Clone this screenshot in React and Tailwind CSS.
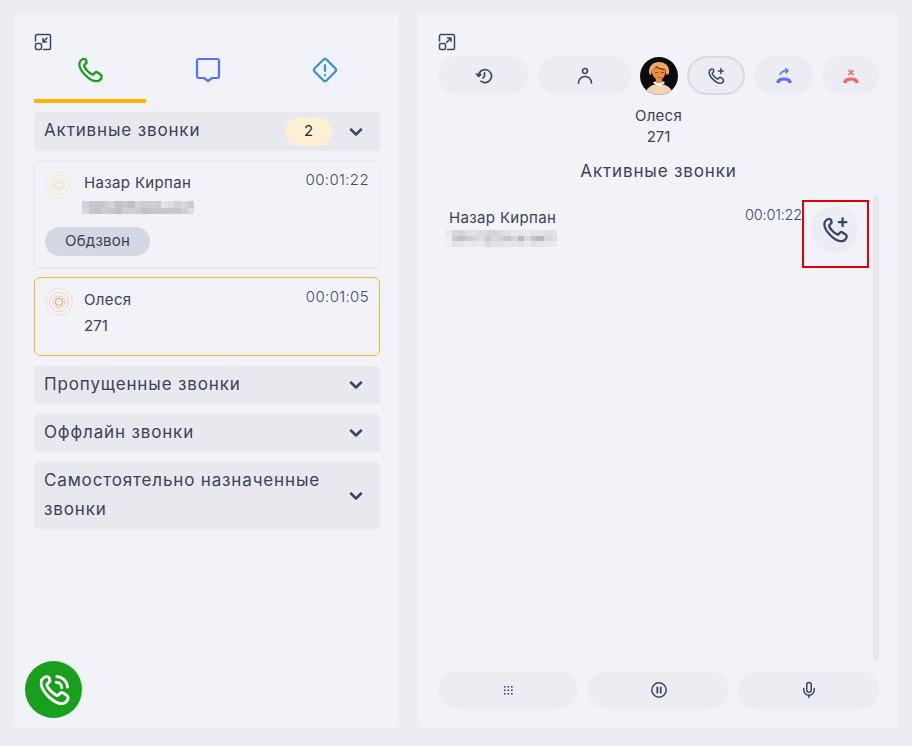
import React from 'react';
import { ChevronDown, Mic } from 'lucide-react';

// pixelated phone numbers, colours read off the screenshot
const mosaicA = [
  '#d0d2d8', '#c6c9cf', '#c4c7cd', '#c8cbd1', '#d2d4d9', '#c1c4ca', '#c6c9cf', '#bfc2c9', '#cfd2d7', '#c9ccd1', '#cbced3', '#c8cbd1', '#e3e4e8', '#dcdee2', '#cfd1d7', '#d6d8dd', '#c9cbd1',
  '#d8d9da', '#c4c7cd', '#c0c3ca', '#ccced4', '#c6c9cf', '#bfc2c9', '#cdd0d5', '#cfd1d6', '#c9ccd1', '#bfc2c9', '#c4c7cc', '#c6c8ce', '#c3c6cc', '#c5c8cd', '#c4c7cc', '#ced0d5', '#dcdee2',
];
const mosaicB = [
  '#e9eaee', '#d6d8dc', '#d3d5da', '#dfe0e4', '#dfe1e5', '#d8dade', '#d4d6db', '#d2d4d9', '#d9dbdf', '#dfe1e5', '#e6e7ea', '#e4e5e9', '#e9eaed', '#e2e3e7', '#e5e6ea', '#dfe0e4', '#e2e3e7',
  '#eff0f3', '#c8cbd0', '#c0c3c9', '#cbced3', '#d2d4d9', '#d9dce3', '#c9ccd1', '#d8dade', '#d1d3d8', '#c6c9ce', '#d4d6da', '#b7bac2', '#d8dade', '#bfc2c8', '#b6bac2', '#d5d7db', '#dcdee2',
  '#eceef0', '#dfe1e4', '#e3e5e8', '#e8e9ec', '#e6e7ea', '#e9eaee', '#d9dbdf', '#e1e2e6', '#dfe0e4', '#e5e6ea', '#e3e4e8', '#e0e2e5', '#e7e8ec', '#e0e1e5', '#e6e7eb', '#e5e6e9', '#e8e9ec',
];

const Mosaic = ({ cells, cols, cellW, cellH, className }) => {
  const rows = Math.ceil(cells.length / cols);
  return (
    <svg className={className} width={cols * cellW} height={rows * cellH} viewBox={`0 0 ${cols * cellW} ${rows * cellH}`} shapeRendering="crispEdges">
      {cells.map((c, i) => (
        <rect key={i} x={(i % cols) * cellW} y={Math.floor(i / cols) * cellH} width={cellW} height={cellH} fill={c} />
      ))}
    </svg>
  );
};

const PHONE_PATH = 'M7 2.500c-1 0-3.500 1-4 3.500-.5 3 1.500 7 5 10.500s7.500 5.500 10.500 5c2.500-.5 3.500-3 3.500-4 0-.8-.5-1.300-1-1.700l-2.500-1.700c-.8-.5-1.700-.4-2.300.3l-1 1.100c-.4.4-1 .5-1.500.2-1.500-.8-2.800-1.800-3.800-2.800s-2-2.300-2.800-3.800c-.3-.5-.2-1.100.2-1.500l1.100-1c.7-.6.8-1.500.3-2.300L8.700 3.500C8.300 3 7.800 2.500 7 2.500z';

const PhonePlus = ({ size = 18 }) => (
  <svg width={size} height={size} viewBox="0 0 24 24" fill="none" stroke="#3d4565" strokeWidth="2" strokeLinecap="round" strokeLinejoin="round">
    <path d={PHONE_PATH} />
    <path d="M18.500 2v6.500M15.250 5.250h6.500" />
  </svg>
);

const PhoneIcon = ({ size, color, strokeWidth = 2, waves = false }) => (
  <svg width={size} height={size} viewBox="0 0 24 24" fill="none" stroke={color} strokeWidth={strokeWidth} strokeLinecap="round" strokeLinejoin="round">
    <path d={PHONE_PATH} />
    {waves && <path d="M14 2.500a8 8 0 0 1 7.500 7.500M13.500 6.500a4 4 0 0 1 4 4" />}
  </svg>
);

const Shrink = () => (
  <svg width="18" height="18" viewBox="0 0 18 18" fill="none" stroke="#3d4565" strokeWidth="1.500" strokeLinecap="round" strokeLinejoin="round">
    <path d="M1.500 8V3a1.500 1.500 0 0 1 1.500-1.500h12A1.500 1.500 0 0 1 16.500 3v12a1.500 1.500 0 0 1-1.500 1.500H9.500" />
    <rect x="1.500" y="10.500" width="6" height="6" rx="1.500" />
    <path d="M13 5l-4 4M9 5.500V9h3.500" />
  </svg>
);

const Expand = () => (
  <svg width="18" height="18" viewBox="0 0 18 18" fill="none" stroke="#3d4565" strokeWidth="1.500" strokeLinecap="round" strokeLinejoin="round">
    <path d="M1.500 8V3a1.500 1.500 0 0 1 1.500-1.500h12A1.500 1.500 0 0 1 16.500 3v12a1.500 1.500 0 0 1-1.500 1.500H9.500" />
    <rect x="1.500" y="10.500" width="6" height="6" rx="1.500" />
    <path d="M8.500 9.500l4.500-4.500M9.500 5H13v3.500" />
  </svg>
);

const HistoryIcon = () => (
  <svg width="18" height="18" viewBox="0 0 18 18" fill="none" stroke="#3d4565" strokeWidth="1.700" strokeLinecap="round" strokeLinejoin="round">
    <path d="M3.500 9a6.500 6.500 0 1 1 2.500 5.200" />
    <path d="M1.500 7l2 2.300L5.800 7.500" />
    <path d="M9.500 5.500v3.800L8 11" />
  </svg>
);

const PersonIcon = () => (
  <svg width="18" height="18" viewBox="0 0 18 18" fill="none" stroke="#3d4565" strokeWidth="1.700" strokeLinecap="round" strokeLinejoin="round">
    <circle cx="9" cy="4" r="2.500" />
    <path d="M2.500 16c0-4 3-6.500 6.500-6.500s6.500 2.500 6.500 6.500" />
  </svg>
);

const PauseIcon = () => (
  <svg width="18" height="18" viewBox="0 0 18 18" fill="none" stroke="#3d4565" strokeLinecap="round">
    <circle cx="9" cy="9" r="7.200" strokeWidth="1.500" />
    <path d="M7.300 6.300v5.400M10.700 6.300v5.400" strokeWidth="1.800" />
  </svg>
);

const Rings = ({ stroke, inner }) => (
  <svg width="28" height="28" viewBox="0 0 28 28" fill="none">
    <circle cx="14" cy="14" r="13.500" stroke={stroke} strokeWidth="1" opacity="0.550" />
    <circle cx="14" cy="14" r="9.500" stroke={stroke} strokeWidth="1" opacity="0.800" />
    <circle cx="14" cy="14" r="6" stroke={stroke} strokeWidth="1" />
    <circle cx="14" cy="14" r="3.500" stroke={inner} strokeWidth="1.200" />
  </svg>
);

const Avatar = () => (
  <svg width="38" height="38" viewBox="0 0 38 38">
    <defs>
      <clipPath id="avatar-clip"><circle cx="19" cy="19" r="19" /></clipPath>
    </defs>
    <g clipPath="url(#avatar-clip)">
      <rect width="38" height="38" fill="#0c0b0b" />
      <path d="M5 38c1-7 6-11 14-11s13 4 14 11z" fill="#f4d3b4" />
      <path d="M13 26l6 3.500 6-3.500-1.500-1.500h-9z" fill="#fdf8f2" />
      <rect x="16" y="20" width="6" height="6" fill="#e88a45" />
      <path d="M9 15c0-6 4-10 10-10 7 0 11 5 10 11-1 2-2 2-3 1l-1-5c-3 0-7-1-9-3-1 3-3 4-4 4l-1 5c-1 0-2-1-2-3z" fill="#eeaa65" />
      <path d="M12 13c2 0 3-1 4-3 2 2 5 2.500 9 3v3c0 4-3 7-6 7s-6-3-7-7z" fill="#f08b3c" />
      <rect x="15" y="15" width="3" height="1" fill="#8a4519" />
      <rect x="21" y="15" width="3" height="1" fill="#8a4519" />
      <rect x="18" y="20" width="3" height="1" fill="#b9501f" />
    </g>
  </svg>
);

const HangUp = ({ color, children }) => (
  <svg width="18" height="18" viewBox="0 0 18 18" fill="none">
    <path d="M3.200 14.300c1.400-3.200 10.200-3.200 11.600 0" stroke={color} strokeWidth="3" />
    <path d="M1.500 13.500h3.600v2.600H1.500zM12.900 13.500h3.600v2.600h-3.600z" fill={color} />
    {children}
  </svg>
);

const Keypad = () => (
  <svg width="9" height="9" viewBox="0 0 9 9" fill="#3d4565">
    {[0, 3.500, 7].flatMap((y) => [0, 3.500, 7].map((x) => <rect key={`${x}-${y}`} x={x} y={y} width="1.600" height="1.600" />))}
  </svg>
);

const Section = ({ title, children, className = '' }) => (
  <div className={`flex items-center justify-between rounded bg-[#e8e9ee] pl-2.5 pr-[14px] text-[#3d4157] ${className}`}>
    <span className="mb-[2px] max-w-[290px] text-[17px] leading-[29px] tracking-[0.85px]">{title}</span>
    <div className="flex shrink-0 items-center">
      {children}
      <ChevronDown size={20} strokeWidth={3} color="#3d4565" />
    </div>
  </div>
);

const CallCard = ({ name, time, rings, className = '', children }) => (
  <div className={`rounded-md px-[10px] pt-[10px] ${className}`}>
    <div className="flex justify-between">
      <div className="flex items-center gap-[11px]">
        {rings}
        <span className="mb-[4px] text-[15px] tracking-[0.35px] text-[#3d4157]">{name}</span>
      </div>
      <span className="-mt-px text-[15px] leading-5 font-light tracking-[0.35px] text-[#3f4a6b]">{time}</span>
    </div>
    {children}
  </div>
);

const Pill = ({ className = '', children }) => (
  <div className={`flex items-center justify-center rounded-full bg-[#ecedf2] ${className}`}>{children}</div>
);

export default function App() {
  return (
    <div className="flex h-[746px] w-[912px] gap-[19px] overflow-hidden bg-[#ecedf2] pt-[13px] pb-[18px] pl-[14px] pr-[14px] font-['Inter',sans-serif]">
      {/* Left panel */}
      <div className="relative flex w-[385px] flex-col rounded-md bg-[#f2f3f8] pl-5 pr-[19px] pt-5">
        <Shrink />
        <div className="mt-[4px] flex h-[48px] items-start">
          <div className="flex h-full w-[112px] justify-center border-b-4 border-[#ffb400] pt-[1px]">
            <PhoneIcon size={28} color="#1a9c1e" strokeWidth={2} />
          </div>
          <div className="flex w-[123px] justify-center pt-[2px]">
            <svg width="26" height="26" viewBox="0 0 26 26" fill="none" stroke="#5770ff" strokeWidth="2.200" strokeLinejoin="round">
              <path d="M4 2h18a2 2 0 0 1 2 2v15a2 2 0 0 1-2 2h-5l-4 3-4-3H4a2 2 0 0 1-2-2V4a2 2 0 0 1 2-2z" />
            </svg>
          </div>
          <div className="flex w-[111px] justify-center pt-[2px]">
            <svg width="26" height="26" viewBox="0 0 26 26" fill="none" stroke="#3a8fd9" strokeWidth="2.200" strokeLinecap="round" strokeLinejoin="round">
              <path d="M11.500 2.500a2 2 0 0 1 3 0l9 9a2 2 0 0 1 0 3l-9 9a2 2 0 0 1-3 0l-9-9a2 2 0 0 1 0-3z" />
              <path d="M13 8v6M13 18v.500" />
            </svg>
          </div>
        </div>

        <Section title="Активные звонки" className="mt-[9px] h-[39px]">
          <span className="mr-[14px] flex h-[29px] w-[47px] items-center justify-center rounded-full bg-[#fcefd2] text-[15px] text-[#26283a]">2</span>
        </Section>

        <CallCard
          name="Назар Кирпан"
          time="00:01:22"
          rings={<Rings stroke="#f5e3b5" inner="#efdcae" />}
          className="mt-[9px] h-[108px] border border-[#e8e9ee] shadow-[0_1px_2px_rgba(30,35,60,0.06)]"
        >
          <Mosaic cells={mosaicA} cols={17} cellW={6.600} cellH={6.500} className="ml-[37px] mt-[2px]" />
          <div className="mt-[13px] flex h-[29px] w-[105px] items-center justify-center rounded-full bg-[#d4d8e3] text-[15px] tracking-[0.2px] text-[#3d4157]">Обдзвон</div>
        </CallCard>

        <CallCard
          name="Олеся"
          time="00:01:05"
          rings={<Rings stroke="#efcb9f" inner="#e8a873" />}
          className="mt-[9px] h-[79px] border border-[#f5b82e]"
        >
          <div className="ml-[39px] text-[15px] leading-5 text-[#3d4157]">271</div>
        </CallCard>

        <Section title="Пропущенные звонки" className="mt-[10px] h-[38px]" />
        <Section title="Оффлайн звонки" className="mt-[10px] h-[38px]" />
        <Section title="Самостоятельно назначенные звонки" className="mt-[10px] h-[67px]" />

        <div className="absolute left-[11px] top-[648px] flex h-[57px] w-[57px] items-center justify-center rounded-full bg-[#18a01c]">
          <PhoneIcon size={34} color="#ffffff" strokeWidth={2} waves />
        </div>
      </div>

      {/* Right panel */}
      <div className="flex w-[480px] flex-col rounded-md bg-[#f2f3f8] pl-5 pr-[19px] pt-5">
        <Expand />
        <div className="mt-[5px] flex h-[39px] items-center gap-[9px]">
          <Pill className="h-[39px] w-[91px]"><HistoryIcon /></Pill>
          <Pill className="h-[39px] w-[93px]"><PersonIcon /></Pill>
          <Avatar />
          <Pill className="h-[39px] w-[58px] border-2 border-[#d8dbe5]"><PhonePlus /></Pill>
          <Pill className="h-[39px] w-[59px]">
            <HangUp color="#5770ff">
              <path d="M5 7.500c1.500-3 4-4 7.500-4M10.500 1.500l2.500 2-2 2.500" stroke="#5770ff" strokeWidth="1.500" strokeLinecap="round" strokeLinejoin="round" />
            </HangUp>
          </Pill>
          <Pill className="h-[39px] w-[57px]">
            <HangUp color="#f4645f">
              <path d="M7 3.500l4 4M11 3.500l-4 4" stroke="#f4645f" strokeWidth="1.700" strokeLinecap="round" />
            </HangUp>
          </Pill>
        </div>

        <div className="mt-[11px] text-center text-[#3d4157]">
          <div className="text-[15px] leading-5 tracking-[0.3px]">Олеся</div>
          <div className="mt-[1px] text-[15px] leading-5">271</div>
        </div>
        <div className="mt-[12px] text-center text-[17px] leading-6 tracking-[0.85px] text-[#3d4157]">Активные звонки</div>

        <div className="relative mt-[12px] flex h-[466px] justify-between">
          <div className="flex w-[364px] justify-between">
            <div className="pl-[11px] pt-[13px] text-[15px] leading-5 tracking-[0.35px] text-[#3d4157]">
              Назар Кирпан
              <Mosaic cells={mosaicB} cols={17} cellW={6.600} cellH={5.600} className="-ml-[4px] mt-[2px]" />
            </div>
            <span className="pt-[10px] text-[14.500px] leading-5 font-light tracking-[-0.2px] text-[#3f4a6b]">00:01:22</span>
          </div>
          <div className="w-[6px] rounded-full bg-[#e8e9ee]" />
          <div className="absolute left-[373px] top-[11px] flex h-[47px] w-[47px] items-center justify-center rounded-full bg-[#ecedf2]">
            <PhonePlus size={28} />
          </div>
          <div className="absolute left-[364px] top-[5px] h-[68px] w-[67px] border-2 border-[#e60000]" />
        </div>

        <div className="mt-[10px] flex gap-[9px]">
          <Pill className="mr-px h-[38px] w-[140px]"><Keypad /></Pill>
          <Pill className="h-[38px] w-[141px]"><PauseIcon /></Pill>
          <Pill className="h-[38px] w-[141px]"><Mic size={18} strokeWidth={2} color="#3d4565" /></Pill>
        </div>
      </div>
    </div>
  );
}
